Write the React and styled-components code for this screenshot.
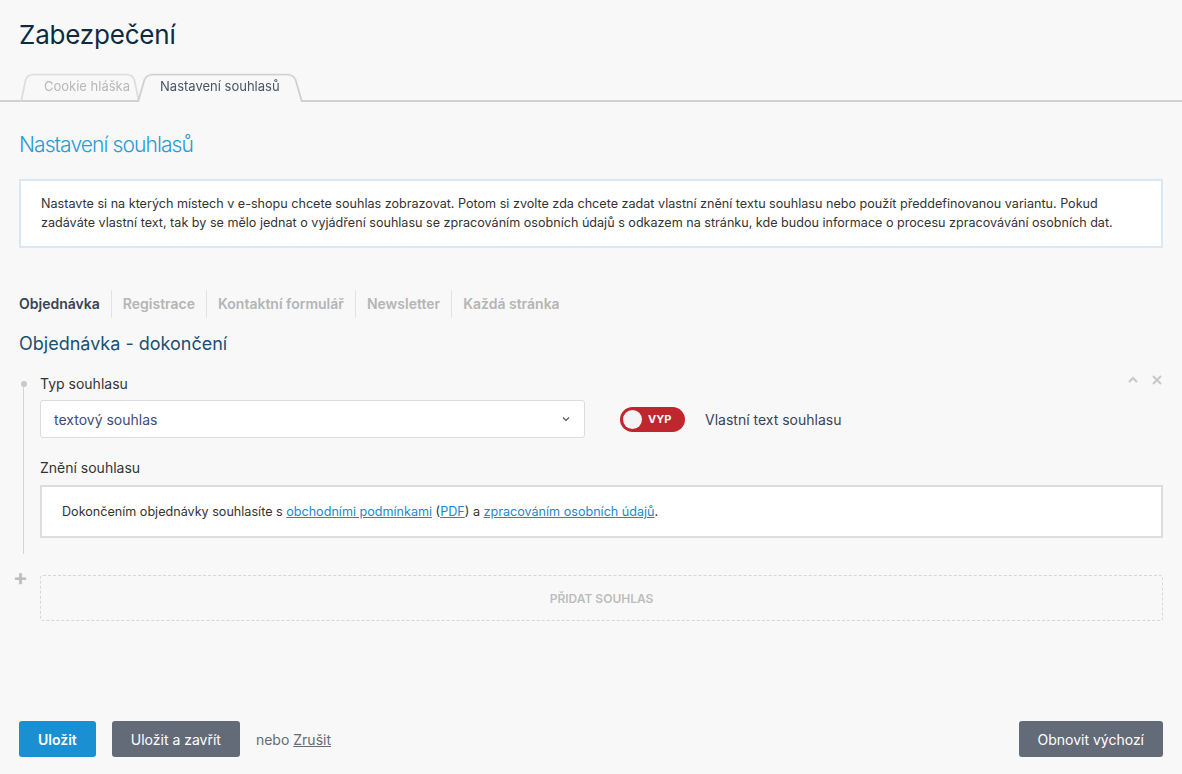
import styled, { createGlobalStyle } from "styled-components";

const GlobalStyle = createGlobalStyle`
  html, body {
    margin: 0;
    padding: 0;
    background: #f8f8f8;
    font-family: Inter, "Noto Sans", "Liberation Sans", sans-serif;
    color: #333;
  }
  * { box-sizing: border-box; }
`;

const Page = styled.div`
  min-height: 774px;
  display: flex;
  flex-direction: column;
  padding: 0 19px 17px;
`;

const Title = styled.h1`
  margin: 0;
  padding-top: 19px;
  font-size: 26px;
  font-weight: 400;
  line-height: 32px;
  color: #102a43;
  letter-spacing: -0.2px;
`;

const TabBar = styled.div`
  display: flex;
  margin: 19px -19px 0;
  padding-left: 20px;
  border-bottom: 2px solid #d0d0d0;
  height: 32px;
`;

const Tab = styled.div`
  position: relative;
  height: 32px;
  padding: 0 ${(p) => (p.$active ? "23px 0 23px" : "10px 0 24px")};
  margin-right: -3px;
  display: flex;
  align-items: center;
  font-size: 13px;
  color: ${(p) => (p.$active ? "#4a5568" : "#b8b8b8")};
  z-index: ${(p) => (p.$active ? 2 : 1)};
  margin-bottom: -2px;
  &::before {
    content: "";
    position: absolute;
    inset: 0;
    background: #f8f8f8;
    border: 2px solid ${(p) => (p.$active ? "#d0d0d0" : "#dedede")};
    border-bottom: ${(p) => (p.$active ? "none" : "2px solid #d0d0d0")};
    border-radius: 8px 8px 0 0;
    transform: perspective(60px) rotateX(12deg);
    transform-origin: bottom;
    z-index: -1;
  }
`;

const SectionTitle = styled.h2`
  margin: 30px 0 0;
  font-size: 21px;
  font-weight: 300;
  color: #2b9ad6;
  letter-spacing: -0.9px;
  line-height: 26px;
`;

const InfoBox = styled.div`
  margin-top: 21px;
  background: #fff;
  border: 2px solid #d8e9f5;
  padding: 13px 20px 14px;
  font-size: 12.6px;
  line-height: 19px;
  color: #333;
`;

const SubTabs = styled.div`
  display: flex;
  margin-top: 42px;
`;

const SubTab = styled.div`
  font-size: 14px;
  font-weight: 600;
  line-height: 28px;
  padding: 0 11px;
  color: ${(p) => (p.$active ? "#3a4452" : "#b5b5b5")};
  border-left: 1px solid #e2e2e2;
  &:first-child {
    padding-left: 0;
    border-left: none;
  }
`;

const GroupTitle = styled.h3`
  margin: 14px 0 0;
  font-size: 18px;
  font-weight: 400;
  line-height: 24px;
  color: #1b4f74;
`;

const Timeline = styled.div`
  position: relative;
  margin-top: 19px;
  padding-left: 21px;
`;

const Item = styled.div`
  position: relative;
  padding-bottom: 26px;
  &::before {
    content: "";
    position: absolute;
    left: -19px;
    top: 6px;
    width: 6px;
    height: 6px;
    border-radius: 50%;
    background: #c8c8c8;
  }
  &::after {
    content: "";
    position: absolute;
    left: -17px;
    top: 12px;
    bottom: 10px;
    width: 1px;
    background: #d4d4d4;
  }
`;

const ItemTools = styled.div`
  position: absolute;
  right: 0;
  top: -1px;
  display: flex;
  gap: 12px;
  color: #c8c8c8;
`;

const Label = styled.div`
  font-size: 14px;
  line-height: 18px;
  color: #333;
  margin-top: ${(p) => p.$gap || 0}px;
`;

const Row = styled.div`
  display: flex;
  align-items: center;
  margin-top: 7px;
`;

const Select = styled.div`
  width: 545px;
  height: 38px;
  background: #fff;
  border: 1px solid #dcdcdc;
  border-radius: 3px;
  display: flex;
  align-items: center;
  justify-content: space-between;
  padding: 0 13px;
  font-size: 14px;
  color: #3d4b7a;
`;

const Toggle = styled.div`
  margin-left: 35px;
  width: 65px;
  height: 25px;
  border-radius: 13px;
  background: #c0262d;
  display: flex;
  align-items: center;
  padding: 0 3px;
  gap: 6px;
`;

const Knob = styled.span`
  width: 19px;
  height: 19px;
  border-radius: 50%;
  background: #f4f4f4;
`;

const ToggleText = styled.span`
  font-size: 11px;
  font-weight: 700;
  color: #fff;
`;

const ToggleLabel = styled.span`
  margin-left: 20px;
  font-size: 14px;
  color: #3a4452;
`;

const TextBox = styled.div`
  margin-top: 8px;
  background: #fff;
  border: 2px solid #dddddd;
  padding: 15px 20px;
  font-size: 12.6px;
  line-height: 19px;
  color: #333;
`;

const Link = styled.a`
  color: #1a8ac9;
  text-decoration: underline;
`;

const AddRow = styled.div`
  position: relative;
  margin-top: 11px;
`;

const Plus = styled.span`
  position: absolute;
  left: -27px;
  top: -11px;
  font-size: 22px;
  font-weight: 700;
  color: #bdbdbd;
`;

const AddButton = styled.div`
  height: 46px;
  border: 1px dashed #d6d6d6;
  border-radius: 3px;
  display: flex;
  align-items: center;
  justify-content: center;
  font-size: 12px;
  font-weight: 600;
  color: #bdbdbd;
`;

const Footer = styled.div`
  margin-top: auto;
  display: flex;
  align-items: center;
`;

const Button = styled.button`
  height: 36px;
  border: none;
  border-radius: 3px;
  padding: 0 19px;
  font-family: inherit;
  font-size: 14px;
  font-weight: ${(p) => (p.$primary ? 600 : 400)};
  color: #fff;
  background: ${(p) => (p.$primary ? "#1a8fd1" : "#646b78")};
  margin-right: ${(p) => (p.$last ? 0 : 16)}px;
  cursor: pointer;
`;

const Or = styled.span`
  font-size: 14px;
  color: #666b75;
  a {
    color: #666b75;
    text-decoration: underline;
  }
`;

const Spacer = styled.div`
  flex: 1;
`;

export default function App() {
  return (
    <Page>
      <GlobalStyle />
      <Title>Zabezpečení</Title>
      <TabBar>
        <Tab>Cookie hláška</Tab>
        <Tab $active>Nastavení souhlasů</Tab>
      </TabBar>
      <SectionTitle>Nastavení souhlasů</SectionTitle>
      <InfoBox>
        Nastavte si na kterých místech v e-shopu chcete souhlas zobrazovat. Potom si zvolte zda chcete zadat vlastní znění textu souhlasu nebo použít předdefinovanou variantu. Pokud zadáváte vlastní text, tak by se mělo jednat o vyjádření souhlasu se zpracováním osobních údajů s odkazem na stránku, kde budou informace o procesu zpracovávání osobních dat.
      </InfoBox>
      <SubTabs>
        <SubTab $active>Objednávka</SubTab>
        <SubTab>Registrace</SubTab>
        <SubTab>Kontaktní formulář</SubTab>
        <SubTab>Newsletter</SubTab>
        <SubTab>Každá stránka</SubTab>
      </SubTabs>
      <GroupTitle>Objednávka - dokončení</GroupTitle>
      <Timeline>
        <Item>
          <ItemTools>
            <svg width="12" height="12" viewBox="0 0 12 12" fill="none" stroke="currentColor" strokeWidth="2">
              <path d="M2 8 L6 4 L10 8" />
            </svg>
            <svg width="12" height="12" viewBox="0 0 12 12" fill="none" stroke="currentColor" strokeWidth="2">
              <path d="M2 2 L10 10 M10 2 L2 10" />
            </svg>
          </ItemTools>
          <Label>Typ souhlasu</Label>
          <Row>
            <Select>
              textový souhlas
              <svg width="10" height="10" viewBox="0 0 10 10" fill="none" stroke="#555" strokeWidth="1.2">
                <path d="M2 3.5 L5 6.5 L8 3.5" />
              </svg>
            </Select>
            <Toggle>
              <Knob />
              <ToggleText>VYP</ToggleText>
            </Toggle>
            <ToggleLabel>Vlastní text souhlasu</ToggleLabel>
          </Row>
          <Label $gap={21}>Znění souhlasu</Label>
          <TextBox>
            Dokončením objednávky souhlasíte s <Link>obchodními podmínkami</Link> (<Link>PDF</Link>) a{" "}
            <Link>zpracováním osobních údajů</Link>.
          </TextBox>
        </Item>
        <AddRow>
          <Plus>+</Plus>
          <AddButton>PŘIDAT SOUHLAS</AddButton>
        </AddRow>
      </Timeline>
      <Footer>
        <Button $primary>Uložit</Button>
        <Button>Uložit a zavřít</Button>
        <Or>
          nebo <a>Zrušit</a>
        </Or>
        <Spacer />
        <Button $last>Obnovit výchozí</Button>
      </Footer>
    </Page>
  );
}
